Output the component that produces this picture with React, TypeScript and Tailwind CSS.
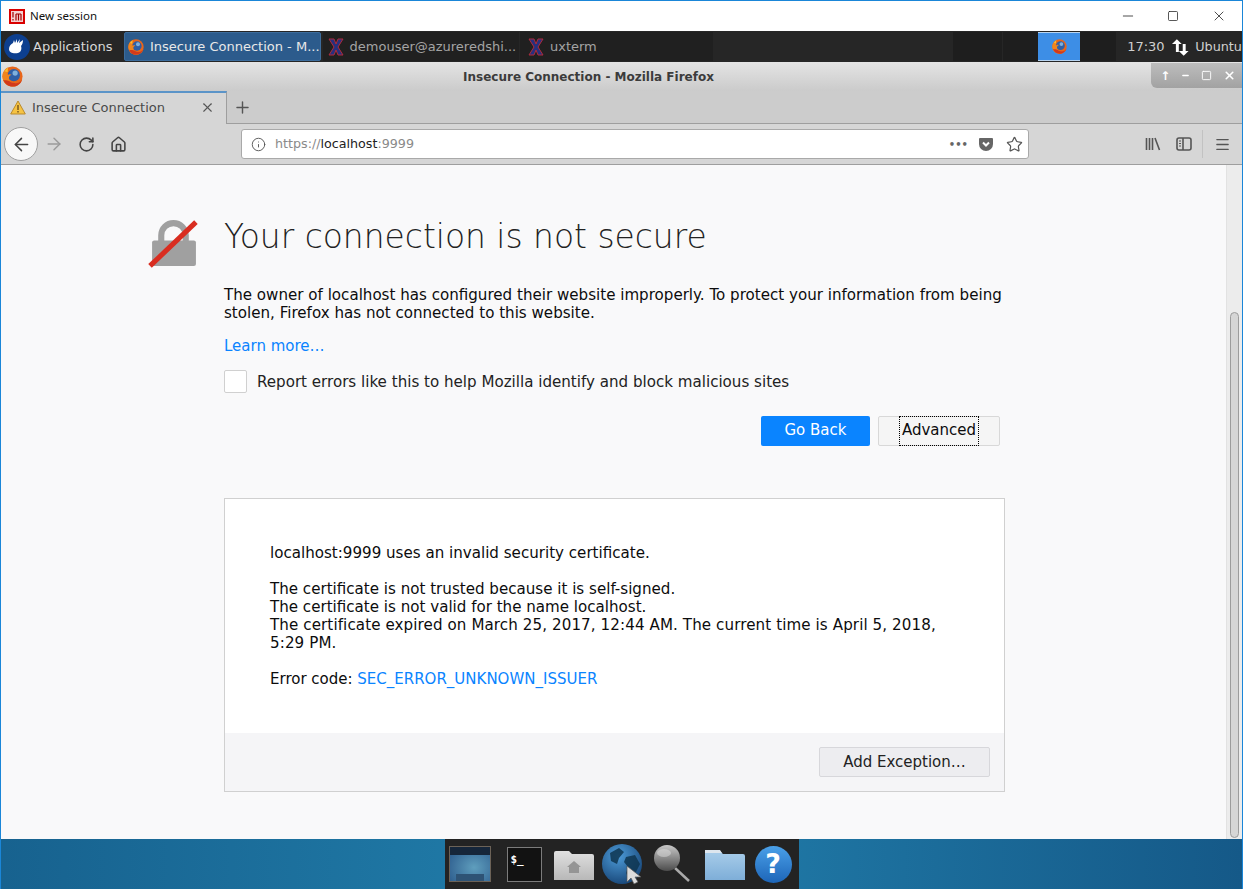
import { ArrowLeft, ArrowRight, Home, RotateCw, Star, Info, X, Plus, Minus, Square, Menu } from 'lucide-react';

const dejavu = "font-['DejaVu_Sans',sans-serif]";

function FirefoxLogo({ size = 20 }: { size?: number }) {
    return (
        <svg width={size} height={size} viewBox="0 0 24 24" className="shrink-0">
            <circle cx="12" cy="12" r="11.5" fill="#e8661a" />
            <circle cx="13.5" cy="10.5" r="7" fill="#2f5fa6" />
            <circle cx="15" cy="8" r="3" fill="#7fb0dc" />
            <path d="M7 1.5C3 3.5.5 7.5.5 12c0 6.5 5 11.5 11.5 11.5 5.5 0 10-3.5 11-8.5-2 3.5-5.500 5-9 4.500-4-.6-6.500-3.500-6-6.500.2-1.500 1.500-2.500 3-3-1.500-1-3.500-.8-4.500.2-.5-2.500-.3-5.700.5-8.700z" fill="#f0851d" />
            <path d="M1.500 16c2 4.500 5.500 7.500 10.500 7.500 5.500 0 10-3.500 11-8.500-2 3.500-5.500 5-9 4.500-3-.4-4.500-2-6-2.500-2.500-1-4.500-.5-6.500-1z" fill="#d23a1c" />
            <path d="M3 6c1-1.500 2.500-3 4-4-.5 1.800-.6 3.300-.5 5z" fill="#fbc02d" />
        </svg>
    );
}

function XtermIcon() {
    return (
        <svg width="16" height="18" viewBox="0 0 16 18" className="shrink-0">
            <path d="M1 1h5l2 5 2-5h5l-5 8 5 8h-5l-2-5-2 5H1l5-8z" fill="#26307e" stroke="#b02a3a" strokeWidth="1" />
        </svg>
    );
}

function TaskButton({ label, active, icon }: { label: string; active?: boolean; icon: React.ReactNode }) {
    return (
        <div
            className={`h-[29px] flex items-center gap-[6px] pl-[3px] rounded-[2px] ${
                active ? 'w-[199px] bg-[#2c5b8c] border border-[#3c6c9c] text-[#e8e8e8]' : 'bg-[#202020] text-[#a4a4a4]'
            }`}
        >
            {icon}
            <span className="text-[13px] whitespace-nowrap">{label}</span>
        </div>
    );
}

function Panel() {
    return (
        <div className={`h-[31px] bg-[#262626] flex items-center ${dejavu}`}>
            <div className="w-[123px] flex items-center gap-[3px] pl-[3px] text-[#d8d8d8] text-[13px] shrink-0">
                <svg width="26" height="26" viewBox="0 0 26 26" className="shrink-0">
                    <circle cx="13" cy="13" r="13" fill="#0d3f8f" />
                    <path d="M5 15c0-3 2-5 4-6l1-3 1 3 2-4 0 4 3-4-1 4 4-3c0 3-1 5-2 6 1 3 0 6-3 7-4 1-9 0-9-4z" fill="#ffffff" />
                </svg>
                <span>Applications</span>
            </div>
            <TaskButton active label="Insecure Connection - M..." icon={<FirefoxLogo size={16} />} />
            <div className="w-[201px] ml-[2px]">
                <div className="pl-[2px] bg-[#202020]">
                    <TaskButton label="demouser@azureredshi..." icon={<XtermIcon />} />
                </div>
            </div>
            <div className="w-[197px] ml-[1px] bg-[#202020] pl-[5px]">
                <TaskButton label="uxterm" icon={<XtermIcon />} />
            </div>
            <div className="w-[413px] h-[29px] flex justify-end">
                <div className="w-[49px] bg-[#1e1e1e]" />
                <div className="w-[36px] bg-[#1e1e1e] border-l border-[#262626]" />
                <div className="w-[42px] bg-[#3d8ee6] border-y border-[#b8d4f0] flex items-center justify-center">
                    <FirefoxLogo size={15} />
                </div>
                <div className="w-[36px] bg-[#1e1e1e]" />
            </div>
            <span className="ml-[11px] text-[13px] text-[#d0d0d0]">17:30</span>
            <svg width="20" height="20" viewBox="0 0 20 20" className="ml-[6px]">
                <path d="M6 2l5 5H8v8H5V7H1zM13 19l5-5h-3V7h-3v7H8z" fill="#fff" />
            </svg>
            <span className="ml-[5px] text-[12.8px] text-[#d0d0d0]">Ubuntu</span>
        </div>
    );
}

function LocationBar() {
    return (
        <div className="ml-[8px] w-[788px] h-[30px] bg-white border border-[#a9a9a9] rounded-[3px] flex items-center pl-[9px] pr-[5px]">
            <Info size={15} strokeWidth={1.5} className="text-[#555]" />
            <span className="ml-[9px] text-[12.7px] text-[#8a8a8a]">
                https://<span className="text-[#222]">localhost</span>:9999
            </span>
            <span className="ml-auto text-[#666] font-bold text-[10px]">•••</span>
            <svg width="16" height="16" viewBox="0 0 16 16" className="ml-[10px]">
                <path d="M2 2h12a1 1 0 011 1v5a7 7 0 01-14 0V3a1 1 0 011-1z" fill="#666" />
                <path d="M5 6.5l3 3 3-3" fill="none" stroke="#fff" strokeWidth="2" />
            </svg>
            <Star size={17} strokeWidth={1.7} className="ml-[12px] text-[#555]" />
        </div>
    );
}

function Toolbar() {
    return (
        <div className="h-[41px] bg-[#d6d6d6] border-b border-[#9e9e9e] flex items-center pl-[3px]">
            <div className="w-[34px] h-[34px] rounded-full bg-[#f8f8f8] border border-[#a0a0a0] flex items-center justify-center">
                <ArrowLeft size={21} strokeWidth={1.7} className="text-[#444]" />
            </div>
            <ArrowRight size={20} strokeWidth={1.7} className="ml-[6px] text-[#9a9a9a]" />
            <RotateCw size={17} strokeWidth={2.2} className="ml-[14px] text-[#444]" />
            <Home size={17} strokeWidth={2.2} className="ml-[15px] text-[#444]" />
            <div className="ml-[106px]"></div>
            <LocationBar />
            <svg width="16" height="16" viewBox="0 0 16 16" className="ml-[116px] text-[#555]">
                <path d="M1.500 2v12M4.500 2v12M7.500 2v12M10 2l4.500 12" fill="none" stroke="currentColor" strokeWidth="1.6" />
            </svg>
            <svg width="16" height="16" viewBox="0 0 16 16" className="ml-[15px]">
                <rect x="1" y="2" width="14" height="12" rx="2" fill="none" stroke="#555" strokeWidth="1.6" />
                <path d="M7 2v12" stroke="#555" strokeWidth="1.6" />
                <path d="M3 5h2M3 7.500h2M3 10h2" stroke="#555" strokeWidth="1" />
            </svg>
            <div className="ml-[10px] h-[28px] w-px bg-[#c2c2c2]" />
            <Menu size={17} strokeWidth={1.8} className="ml-[11px] text-[#555]" />
        </div>
    );
}

function FirefoxChrome() {
    return (
        <div className={`${dejavu} shrink-0`}>
            <div className="h-[29px] bg-gradient-to-b from-[#e4e4e4] to-[#cbcbcb] flex items-center relative">
                <div className="pl-[1px]">
                    <FirefoxLogo size={21} />
                </div>
                <span className="flex-1 text-center text-[12px] font-bold text-[#3c3c3c] pr-[88px]">
                    Insecure Connection - Mozilla Firefox
                </span>
                <div className="absolute right-0 top-[1px] w-[91px] h-[25px] bg-gradient-to-b from-[#bdbdbd] to-[#a2a2a2] rounded-bl-[6px] flex items-center justify-around pl-[4px] pr-[1px] text-white">
                    <span className="text-[12px] font-bold">↑</span>
                    <Minus size={9} strokeWidth={4} />
                    <Square size={11} strokeWidth={2} />
                    <X size={13} strokeWidth={3} />
                </div>
            </div>
            <div className="h-[33px] bg-[#cccccc] border-b border-[#9e9e9e] flex">
                <div className="w-[226px] bg-[#d6d6d6] border-t-[2px] border-[#5b94c8] border-r border-r-[#9e9e9e] h-[33px] flex items-center pl-[9px] pr-[11px] pb-[2px]">
                    <svg width="16" height="15" viewBox="0 0 16 15">
                        <path d="M8 1l7.300 13H.7z" fill="#f6c343" stroke="#b98a2e" strokeWidth="1" strokeLinejoin="round" />
                        <path d="M8 5v5M8 11v1.500" stroke="#7a5a20" strokeWidth="1.500" />
                    </svg>
                    <span className="ml-[6px] text-[13px] text-[#4a4a4a]">Insecure Connection</span>
                    <X size={15} strokeWidth={1.8} className="ml-auto text-[#555]" />
                </div>
                <div className="flex items-center pl-[6px]">
                    <Plus size={19} strokeWidth={1.8} className="text-[#555]" />
                </div>
            </div>
            <Toolbar />
        </div>
    );
}

function ErrorPage() {
    return (
        <div className={`flex-1 bg-[#f9f9fa] flex ${dejavu} text-[#0c0c0d] min-h-0`}>
            <div className="flex-1 pl-[147px] pt-[53px] flex">
                <svg width="51" height="51" viewBox="0 0 50 50" className="shrink-0">
                    <path d="M13 23v-6a12 12 0 0124 0v6" fill="none" stroke="#a0a0a0" strokeWidth="6" />
                    <rect x="4" y="22" width="43" height="25" rx="2" fill="#a0a0a0" />
                    <path d="M2 47L47 4" stroke="#d92d20" strokeWidth="5" />
                </svg>
                <div className="ml-[25px] w-[781px]">
                    <h1 className="text-[32.9px] leading-[40px] font-extralight text-[#222] whitespace-nowrap -mt-[1px]">
                        Your connection is not secure
                    </h1>
                    <p className="mt-[29px] text-[15.1px] leading-[18px] whitespace-pre-line">
                        The owner of localhost has configured their website improperly. To protect your information from being{'\n'}stolen, Firefox has not connected to this website.
                    </p>
                    <p className="mt-[15px] text-[15px] leading-[18px] text-[#0a84ff]">Learn more…</p>
                    <div className="mt-[15px] flex items-center">
                        <div className="w-[23px] h-[23px] bg-white border border-[#d0d0d0] rounded-[2px]" />
                        <span className="ml-[10px] mt-[1px] text-[15.1px] text-[#222]">Report errors like this to help Mozilla identify and block malicious sites</span>
                    </div>
                    <div className="mt-[22px] flex justify-end pr-[5px] gap-[8px]">
                        <button className="w-[109px] h-[30px] bg-[#0a84ff] rounded-[2px] text-white text-[15px]">Go Back</button>
                        <button className="w-[122px] h-[30px] bg-[#f5f5f5] border border-[#d8d8d8] rounded-[2px] text-[15px] flex items-center justify-center">
                            <span className="outline-1 outline-dotted outline-black h-[28px] w-[78px] flex items-center justify-center">Advanced</span>
                        </button>
                    </div>
                    <div className="mt-[52px] border border-[#d0d0d0] bg-white text-[15.1px] leading-[18px]">
                        <div className="pt-[45px] pl-[45px] pr-[60px] pb-[45px] whitespace-pre-line">
                            <p>localhost:9999 uses an invalid security certificate.</p>
                            <p className="mt-[18px]">
                                The certificate is not trusted because it is self-signed.{'\n'}The certificate is not valid for the name localhost.{'\n'}
                                <span className="tracking-[0.1px]">The certificate expired on March 25, 2017, 12:44 AM. The current time is April 5, 2018, 5:29 PM.</span>
                            </p>
                            <p className="mt-[18px] text-[15px]">
                                Error code: <span className="text-[#0a84ff]">SEC_ERROR_UNKNOWN_ISSUER</span>
                            </p>
                        </div>
                        <div className="h-[58px] bg-[#f5f5f7] flex items-center justify-end pr-[14px]">
                            <button className="w-[171px] h-[30px] bg-[#ededf0] border border-[#d7d7db] rounded-[2px] text-[15px] text-[#222]">Add Exception…</button>
                        </div>
                    </div>
                </div>
            </div>
            <div className="w-[16px] shrink-0 bg-[#ececec] border-l border-[#e2e2e2] flex flex-col justify-end pb-[1px] items-center">
                <div className="w-[9px] h-[526px] bg-[#d6d6d6] border border-[#9c9c9c] rounded-[5px]" />
            </div>
        </div>
    );
}

function Dock() {
    return (
        <div className="h-[50px] shrink-0 bg-gradient-to-r from-[#17628f] via-[#2280ad] to-[#155988] flex justify-center">
            <div className="w-[354px] h-full bg-[#232323] flex items-center pl-[4px]">
                <svg width="42" height="38" viewBox="0 0 42 38" className="shrink-0">
                    <defs>
                        <radialGradient id="desk" cx="0.6" cy="0.6" r="0.7">
                            <stop offset="0" stopColor="#5f9ebd" />
                            <stop offset="1" stopColor="#2f5f8f" />
                        </radialGradient>
                    </defs>
                    <rect x="0.5" y="1.500" width="41" height="35" fill="url(#desk)" stroke="#6c6257" />
                    <rect x="1" y="2" width="40" height="8" fill="#16263a" />
                    <rect x="7" y="29" width="28" height="7" fill="#2e5375" />
                </svg>
                <div className="ml-[16px] w-[35px] h-[35px] bg-[#121212] border border-[#7c7c7c] text-white text-[11px] font-['DejaVu_Sans_Mono',monospace] font-bold pl-[3px] pt-[1px] leading-[22px] shrink-0">
                    $_
                </div>
                <svg width="42" height="34" viewBox="0 0 42 34" className="ml-[11px] shrink-0">
                    <defs>
                        <linearGradient id="grey" x1="0" y1="0" x2="0" y2="1">
                            <stop offset="0" stopColor="#e0e0e0" />
                            <stop offset="1" stopColor="#b8b8b8" />
                        </linearGradient>
                    </defs>
                    <path d="M1 6a2 2 0 012-2h13l3 3h20a2 2 0 012 2v24H1z" fill="url(#grey)" />
                    <path d="M21 14l-7 6h2v6h10v-6h2z" fill="#959595" />
                </svg>
                <svg width="42" height="42" viewBox="0 0 42 42" className="ml-[7px] shrink-0">
                    <defs>
                        <radialGradient id="globe" cx="0.4" cy="0.3" r="0.8">
                            <stop offset="0" stopColor="#4d9bd8" />
                            <stop offset="1" stopColor="#133f70" />
                        </radialGradient>
                    </defs>
                    <circle cx="20" cy="21" r="20" fill="url(#globe)" />
                    <path d="M8 10l9-5 5 4-5 6-2 6-6-3zM24 14l9-2 5 9-4 8-7 7-3-6 2-6-4-5z" fill="#0e3550" opacity="0.85" />
                    <path d="M25 23v16l4-4 3 6 4-2-3-5h6z" fill="#dcdcdc" stroke="#555" strokeWidth="0.7" />
                </svg>
                <svg width="40" height="40" viewBox="0 0 40 40" className="ml-[7px] shrink-0">
                    <defs>
                        <linearGradient id="lens" x1="0" y1="0" x2="0" y2="1">
                            <stop offset="0" stopColor="#c8c8c8" />
                            <stop offset="1" stopColor="#4c4c4c" />
                        </linearGradient>
                    </defs>
                    <path d="M24 24l14 13" stroke="#aaa" strokeWidth="2.500" />
                    <circle cx="16" cy="14" r="13" fill="url(#lens)" />
                    <ellipse cx="13" cy="9" rx="7" ry="4" fill="#ddd" opacity="0.5" />
                </svg>
                <svg width="42" height="34" viewBox="0 0 42 34" className="ml-[13px] shrink-0">
                    <defs>
                        <linearGradient id="blue" x1="0" y1="0" x2="0" y2="1">
                            <stop offset="0" stopColor="#a8cdea" />
                            <stop offset="1" stopColor="#7eaed8" />
                        </linearGradient>
                    </defs>
                    <path d="M1 6a2 2 0 012-2h13l3 3h20a2 2 0 012 2v24H1z" fill="url(#blue)" />
                    <path d="M1 3h15l2 3H1z" fill="#dde6ee" />
                </svg>
                <div className="ml-[9px] w-[37px] h-[37px] shrink-0 rounded-full bg-gradient-to-b from-[#4aa0e8] to-[#1d65b8] text-white text-[27px] font-bold flex items-center justify-center font-['DejaVu_Sans',sans-serif]">
                    ?
                </div>
            </div>
        </div>
    );
}

export default function App() {
    return (
        <div className="w-[1243px] h-[889px] border-x border-t border-[#1a86d8] flex flex-col overflow-hidden bg-white">
            <div className="h-[30px] shrink-0 bg-white flex items-center pl-[8px] font-['Noto_Sans',sans-serif] text-[11.5px] text-[#111]">
                <svg width="16" height="15" viewBox="0 0 16 15">
                    <rect width="16" height="15" fill="#d90000" />
                    <rect x="2" y="2" width="12" height="11" fill="#f4d0d0" />
                    <path d="M4 3v5.500M4 10v1.500M7 5v6.500M9.500 5v6.500M12 5v6.500M7 5h5" stroke="#a00000" strokeWidth="1.200" />
                </svg>
                <span className="ml-[5px]">New session</span>
                <div className="ml-auto flex items-center text-[#222]">
                    <Minus size={16} strokeWidth={1.2} />
                    <Square size={12} strokeWidth={1.5} className="ml-[31px]" />
                    <X size={16} strokeWidth={1.2} className="ml-[32px] mr-[15px]" />
                </div>
            </div>
            <Panel />
            <FirefoxChrome />
            <ErrorPage />
            <Dock />
        </div>
    );
}
